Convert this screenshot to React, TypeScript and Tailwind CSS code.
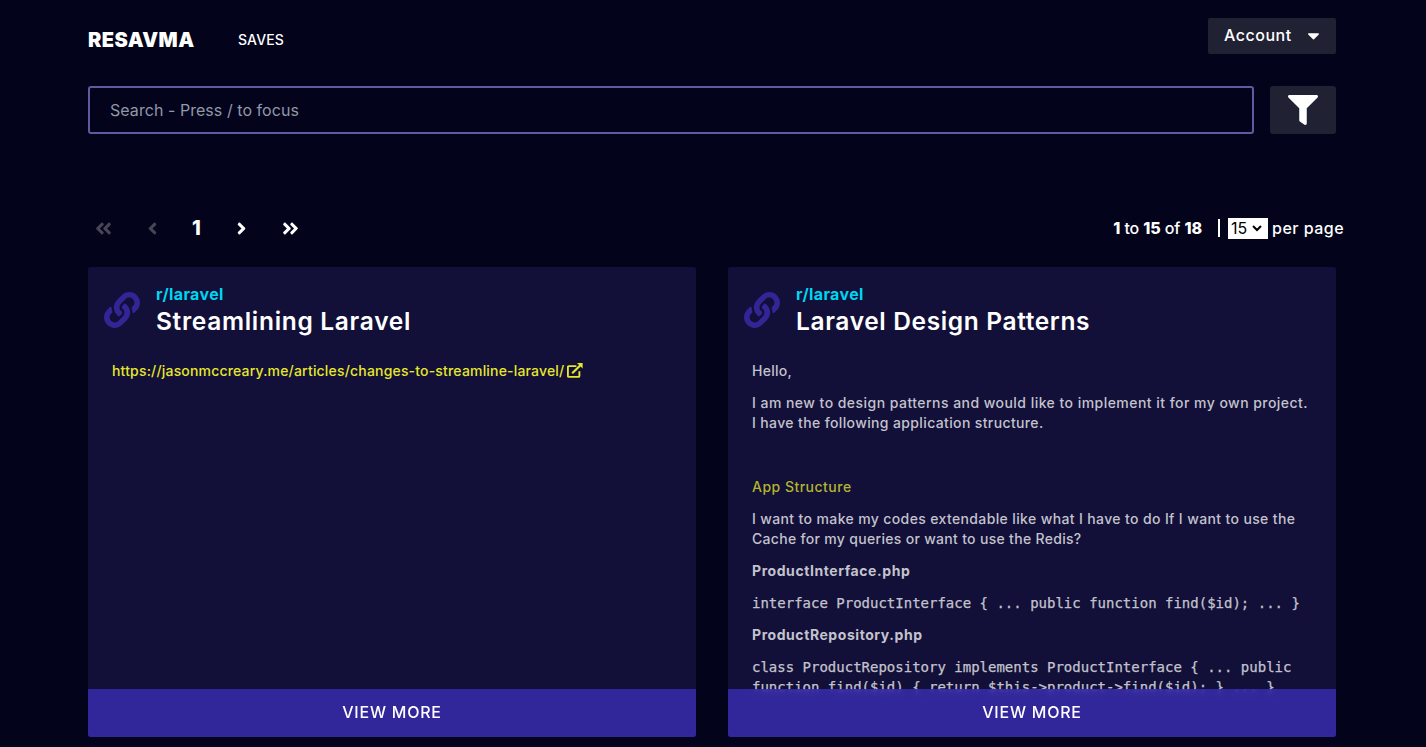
import type { ReactNode } from 'react';
import {
  FaAngleDoubleLeft,
  FaAngleDoubleRight,
  FaAngleLeft,
  FaAngleRight,
  FaCaretDown,
  FaFilter,
  FaLink,
} from 'react-icons/fa';

function ExternalIcon() {
  return (
    <svg viewBox="0 0 16 16" className="ml-[3px] size-4 shrink-0" fill="none" stroke="currentColor" strokeWidth="1.9">
      <path d="M9.4 3.1H1.9Q.9 3.1 .9 4.1V12.9Q.9 13.9 1.9 13.9H11.4Q12.4 13.9 12.4 12.9V8.2" />
      <path d="M5.2 10.2L13.4 2.2" strokeWidth="2.2" />
      <path d="M10 0H15.6V5.6Z" fill="currentColor" stroke="none" />
    </svg>
  );
}

function SaveCard({ title, spacing, children }: { title: string; spacing: string; children: ReactNode }) {
  return (
    <article className="relative h-[470px] overflow-hidden rounded-xs bg-[#120f38]">
      <header className="flex items-start gap-4 px-4 pt-[18px]">
        <FaLink className="mt-[7px] size-9 shrink-0 text-[#322696]" />
        <div>
          <p className="text-[16px] leading-[18px] font-bold tracking-[0.38px] text-[#00d5ef]">r/laravel</p>
          <h2 className={`whitespace-nowrap text-[24.5px] leading-9 font-semibold text-white ${spacing}`}>{title}</h2>
        </div>
      </header>
      <div className="px-6 pt-[22px] text-[14px] leading-5 font-[450] whitespace-nowrap">{children}</div>
      <button className="absolute inset-x-0 bottom-0 h-12 bg-[#382bab]/85 pb-0.5 text-[16px] font-[450] tracking-[0.77px] text-white backdrop-blur-[3px]">
        VIEW MORE
      </button>
    </article>
  );
}

export default function App() {
  return (
    <div className="h-[747px] overflow-hidden bg-[#03031b] px-[88px] font-['Inter',sans-serif] text-white">
      <div className="w-[1248px]">
        <nav className="flex h-[86px] items-start pt-[18px]">
          <a className="mt-1.5 w-[150px] text-[20px] leading-8 font-black tracking-[0.44px]">RESAVMA</a>
          <a className="mt-1.5 text-[14px] leading-8 font-[450] tracking-[0.14px]">SAVES</a>
          <button className="ml-auto flex h-9 w-32 items-center rounded-xs bg-[#212134] pl-4 text-[16px] font-[450]">
            <span className="pb-0.5 tracking-[0.52px]">Account</span>
            <FaCaretDown className="mb-px ml-3 h-[19px] w-[19px]" />
          </button>
        </nav>
        <div className="flex gap-4">
          <input
            className="h-12 flex-1 rounded-[3px] border-2 border-[#605a9f] bg-transparent px-5 text-[16px] tracking-[0.05px] outline-none placeholder:text-[#9198a8]"
            placeholder="Search - Press / to focus"
          />
          <button className="flex h-12 w-[66px] items-center justify-center rounded-[3px] bg-[#212134]">
            <FaFilter className="size-[30px]" />
          </button>
        </div>
        <div className="mt-[78px] flex h-8 w-[1256px] items-center">
          <div className="flex flex-1 items-center">
            <FaAngleDoubleLeft className="ml-1.5 size-[19px] text-[#464657]" />
            <FaAngleLeft className="ml-[30px] size-[19px] text-[#464657]" />
            <span className="ml-[30px] w-3 text-[20px] leading-8 font-extrabold">1</span>
            <FaAngleRight className="ml-[28px] size-[19px]" />
            <FaAngleDoubleRight className="ml-[30px] size-[19px]" />
          </div>
          <p className="text-[16px] font-[450] tracking-[-0.1px]">
            <b className="font-extrabold">1</b> to <b className="font-extrabold">15</b> of <b className="font-extrabold">18</b>
          </p>
          <span className="ml-4 h-[18px] w-0.5 bg-white" />
          <div className="ml-2 flex h-[21px] w-10 items-center bg-white pl-[3px] text-[16px] text-black">
            15
            <svg viewBox="0 0 10 8" className="ml-[5px] h-2 w-2.5" fill="none" stroke="currentColor" strokeWidth="2">
              <path d="M1 2L5 6L9 2" />
            </svg>
          </div>
          <span className="ml-1 w-[72px] text-[16px] font-[450] tracking-[0.49px] whitespace-nowrap">per page</span>
        </div>
        <main className="mt-[23px] grid grid-cols-2 gap-8">
          <SaveCard title="Streamlining Laravel" spacing="tracking-[0.69px]">
            <a className="flex items-center text-[#e6e72a]">
              <span className="tracking-[0.18px]">https://jasonmccreary.me/articles/changes-to-streamline-laravel/</span>
              <ExternalIcon />
            </a>
          </SaveCard>
          <SaveCard title="Laravel Design Patterns" spacing="tracking-[0.64px]">
            <div className="text-[#c3c3cd]">
              <p className="tracking-[0.27px]">Hello,</p>
              <p className="mt-3">
                <span className="tracking-[0.46px]">I am new to design patterns and would like to implement it for my own project.</span>
                <br />
                <span className="tracking-[0.37px]">I have the following application structure.</span>
              </p>
              <h3 className="mt-11 tracking-[0.49px] text-[#b3b52e]">App Structure</h3>
              <p className="mt-3">
                <span className="tracking-[0.37px]">I want to make my codes extendable like what I have to do If I want to use the</span>
                <br />
                <span className="tracking-[0.31px]">Cache for my queries or want to use the Redis?</span>
              </p>
              <p className="mt-3 font-bold tracking-[0.57px]">ProductInterface.php</p>
              <p className="mt-3 font-['DejaVu_Sans_Mono',monospace] text-[14px] font-normal [-webkit-text-stroke:0.25px]">
                {'interface ProductInterface { ... public function find($id); ... }'}
              </p>
              <p className="mt-3 font-bold tracking-[0.56px]">ProductRepository.php</p>
              <p className="mt-3 font-['DejaVu_Sans_Mono',monospace] text-[14px] font-normal [-webkit-text-stroke:0.25px]">
                {'class ProductRepository implements ProductInterface { ... public'}
                <br />
                {'function find($id) { return $this->product->find($id); } ... }'}
              </p>
            </div>
          </SaveCard>
        </main>
      </div>
    </div>
  );
}
